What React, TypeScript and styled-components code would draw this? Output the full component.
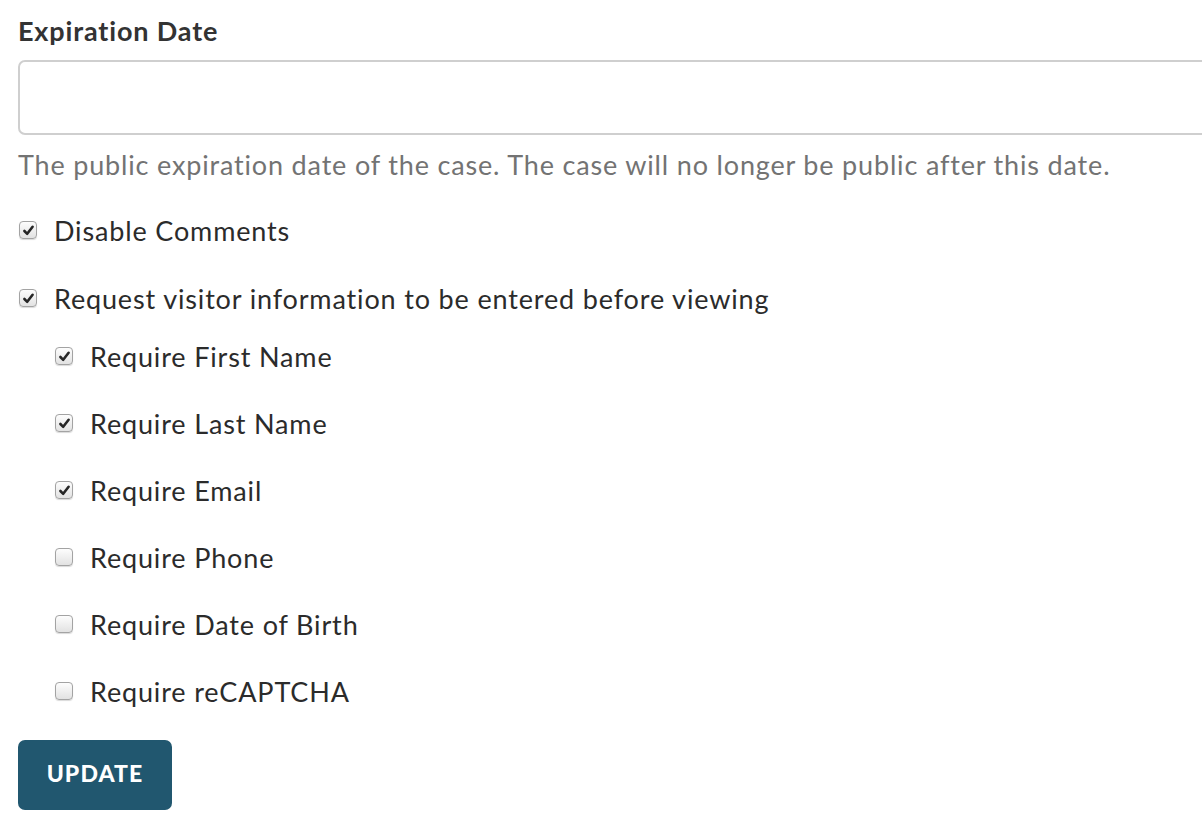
import React from 'react';
import styled, { createGlobalStyle } from 'styled-components';

const GlobalStyle = createGlobalStyle`
  html, body {
    margin: 0;
    padding: 0;
    background: #ffffff;
    overflow: hidden;
  }

  body {
    font-family: Lato, 'Open Sans', Arial, sans-serif;
    color: #333333;
  }
`;

const Page = styled.div`
  padding: 15px 0 0 18px;
  display: flex;
  flex-direction: column;
`;

const FieldLabel = styled.div`
  font-size: 27px;
  font-weight: 700;
  line-height: 32px;
  letter-spacing: 0.85px;
  color: #333333;
`;

const DateInput = styled.div`
  margin-top: 13px;
  height: 75px;
  width: calc(100% + 40px);
  box-sizing: border-box;
  border: 2px solid #cfcfcf;
  border-radius: 7px;
  background: #ffffff;
`;

const HelpText = styled.p`
  margin: 14px 0 0;
  font-size: 27px;
  line-height: 32px;
  letter-spacing: 0.83px;
  color: #737373;
  white-space: nowrap;
`;

const OptionList = styled.div<{ $nested?: boolean }>`
  display: flex;
  flex-direction: column;
  gap: ${(p) => (p.$nested ? '27px' : '28px')};
  margin-top: ${(p) => (p.$nested ? '18px' : '29px')};
  padding-left: ${(p) => (p.$nested ? '36px' : '0')};
`;

const OptionRow = styled.label`
  display: flex;
  align-items: center;
  gap: 17px;
  height: 40px;
  font-size: 27px;
  letter-spacing: 0.85px;
  color: #2b2b2b;
  white-space: nowrap;
`;

const Box = styled.span<{ $checked: boolean }>`
  width: 18px;
  height: 18px;
  margin-left: 1px;
  box-sizing: border-box;
  border: 1px solid #a3a3a3;
  border-radius: 4px;
  background: linear-gradient(#fdfdfd, #e2e2e2);
  box-shadow: 0 1px 1px rgba(0, 0, 0, 0.15);
  flex-shrink: 0;
  display: flex;
  align-items: center;
  justify-content: center;
`;

const Check = styled.svg`
  width: 13px;
  height: 13px;
`;

const UpdateButton = styled.button`
  margin-top: 29px;
  align-self: flex-start;
  width: 154px;
  height: 70px;
  padding: 0 0 4px;
  border: none;
  border-radius: 7px;
  background: #21576f;
  color: #ffffff;
  font-family: Lato, 'Open Sans', Arial, sans-serif;
  font-size: 23px;
  font-weight: 900;
  letter-spacing: 1.1px;
  text-transform: uppercase;
  cursor: pointer;
`;

const Checkbox: React.FC<{ checked: boolean; label: string }> = ({ checked, label }) => (
  <OptionRow>
    <Box $checked={checked}>
      {checked && (
        <Check viewBox="0 0 13 13">
          <path
            d="M2.4 7 L5.2 9.8 L10.6 2.8"
            fill="none"
            stroke="#262626"
            strokeWidth="2.6"
            strokeLinecap="round"
            strokeLinejoin="round"
          />
        </Check>
      )}
    </Box>
    {label}
  </OptionRow>
);

const visitorFields = [
  { label: 'Require First Name', checked: true },
  { label: 'Require Last Name', checked: true },
  { label: 'Require Email', checked: true },
  { label: 'Require Phone', checked: false },
  { label: 'Require Date of Birth', checked: false },
  { label: 'Require reCAPTCHA', checked: false },
];

const App: React.FC = () => (
  <>
    <GlobalStyle />
    <Page>
      <FieldLabel>Expiration Date</FieldLabel>
      <DateInput />
      <HelpText>
        The public expiration date of the case. The case will no longer be public after this date.
      </HelpText>
      <OptionList>
        <Checkbox checked label="Disable Comments" />
        <div>
          <Checkbox checked label="Request visitor information to be entered before viewing" />
          <OptionList $nested>
            {visitorFields.map((f) => (
              <Checkbox key={f.label} checked={f.checked} label={f.label} />
            ))}
          </OptionList>
        </div>
      </OptionList>
      <UpdateButton>Update</UpdateButton>
    </Page>
  </>
);

export default App;
